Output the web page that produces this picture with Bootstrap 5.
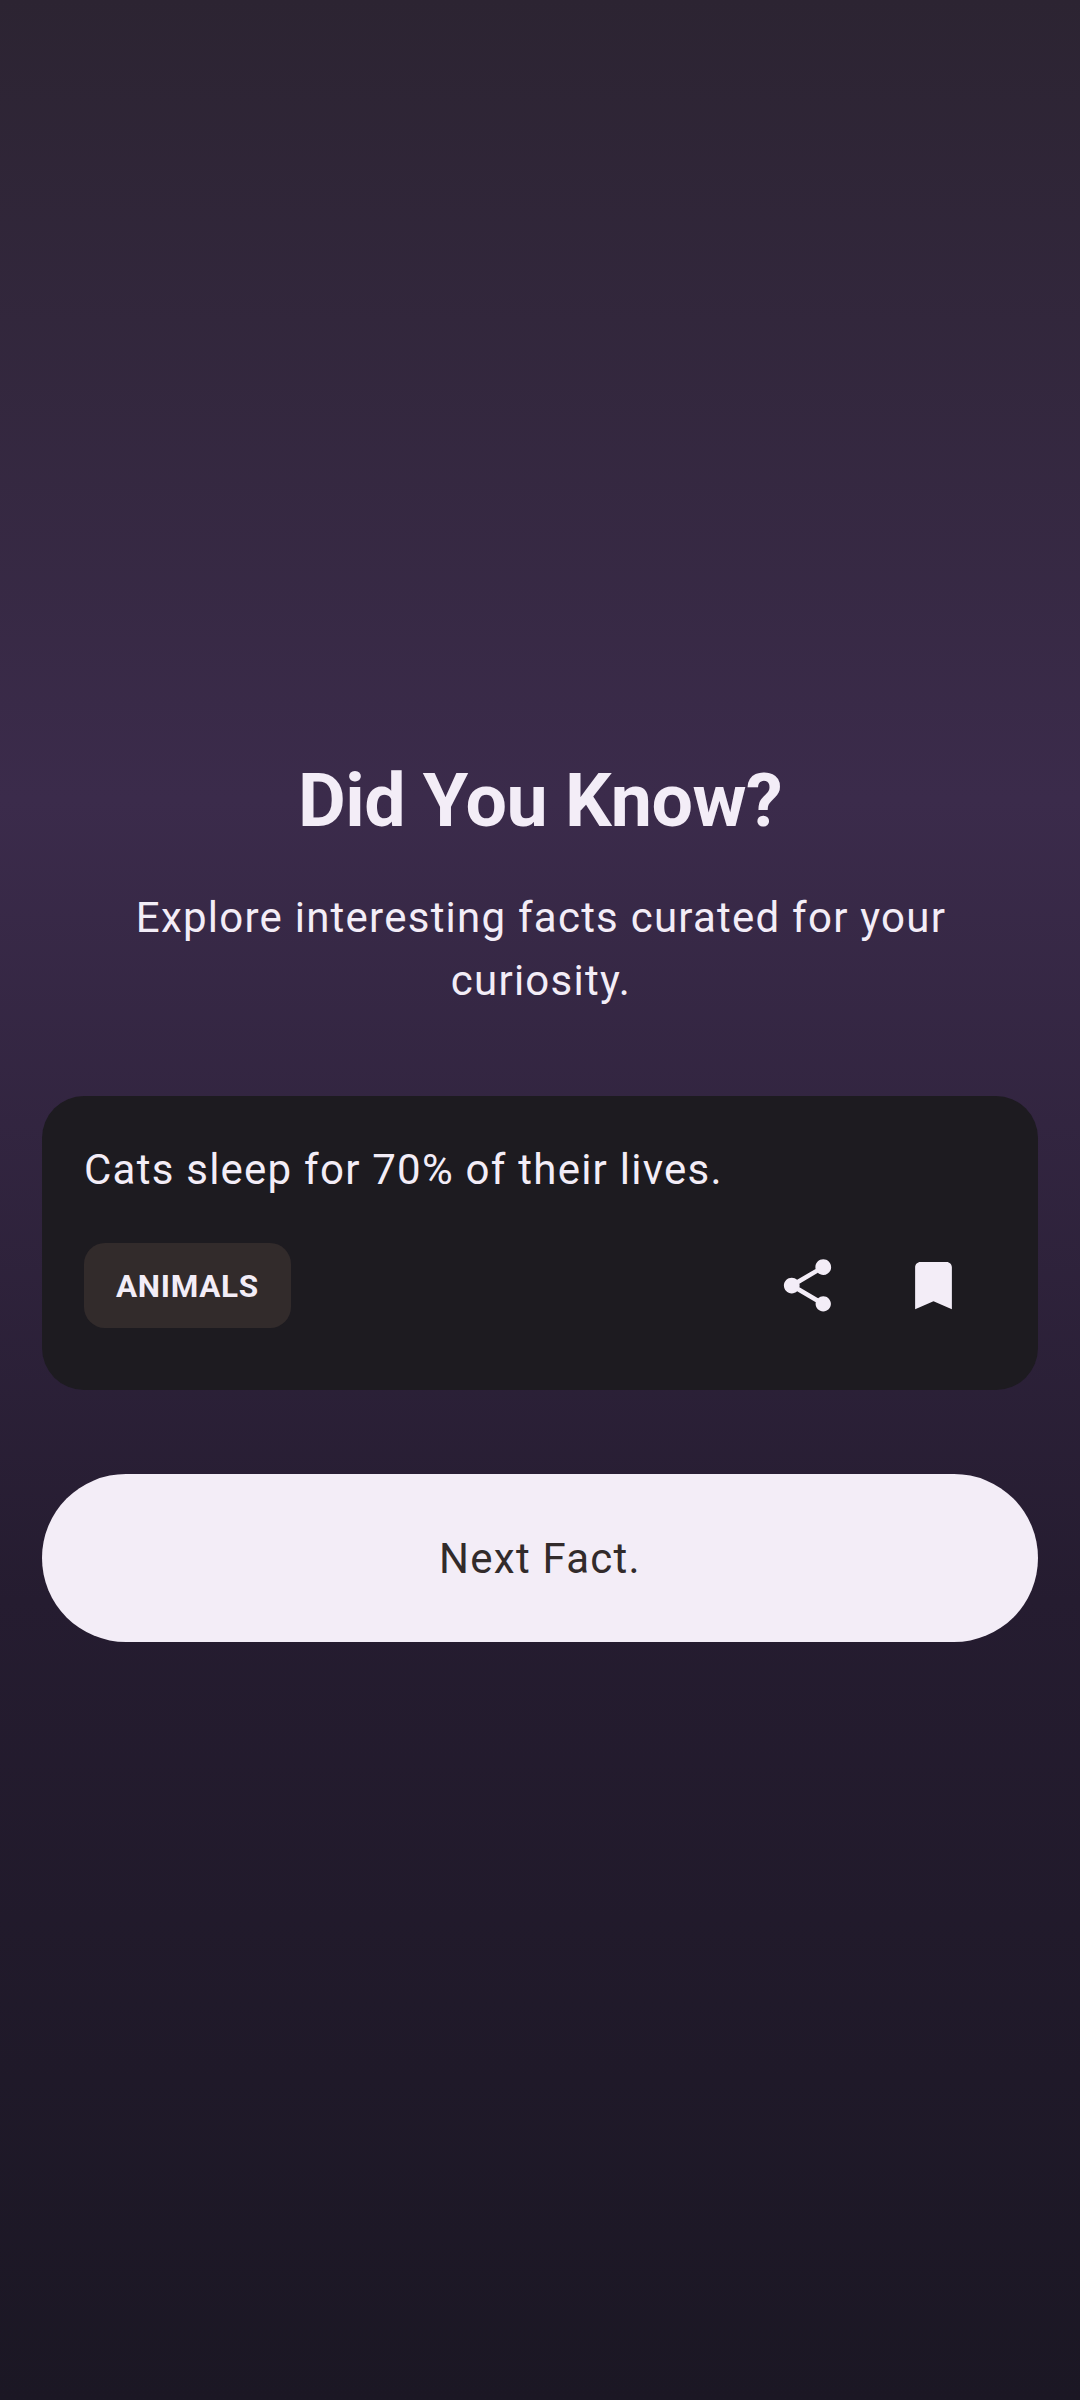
<!DOCTYPE html>
<html lang="en">
<head>
<meta charset="utf-8">
<meta name="viewport" content="width=device-width, initial-scale=1">
<title>Did You Know?</title>
<link href="https://cdn.jsdelivr.net/npm/bootstrap@5.3.0/dist/css/bootstrap.min.css" rel="stylesheet">
<style>
  body { font-family: Roboto, sans-serif; font-size: 42px; line-height: 63px; letter-spacing: 1.24px; color: #f3edf7; }
  .fact-screen { height: 2400px; padding: 758px 42px 0; background: linear-gradient(180deg, #2c2432 0%, #3b2b4b 33.33%, #251c30 66.67%, #1b1724 100%); }
  .fact-title { font-size: 73.5px; line-height: 86px; font-weight: 700; letter-spacing: -.5px; margin-bottom: 42px; }
  .fact-intro { padding: 0 41px 0 43px; margin-bottom: 84px; }
  .fact-card { background: #1d1b20; color: inherit; border-radius: 42px; padding: 42px; margin-bottom: 84px; }
  .fact-text { margin-bottom: 21px; }
  .fact-chip { background: #322b2b; border-radius: 21px; height: 85px; padding: 2px 32px 0; font-size: 31.5px; font-weight: 700; letter-spacing: .68px; }
  .fact-action { width: 126px; height: 126px; color: inherit; }
  .fact-action svg { width: 63px; height: 63px; }
  .fact-next, .fact-next:hover { height: 168px; background: #f3edf7; color: #322b2b; font-size: 42px; letter-spacing: 1.24px; }
</style>
</head>
<body>
<main class="fact-screen d-flex flex-column">
  <h1 class="fact-title text-center">Did You Know?</h1>
  <p class="fact-intro text-center">Explore interesting facts curated for your curiosity.</p>
  <section class="fact-card card border-0">
    <p class="fact-text">Cats sleep for 70% of their lives.</p>
    <div class="d-flex align-items-center">
      <span class="fact-chip d-inline-flex align-items-center me-auto">ANIMALS</span>
      <button type="button" class="fact-action btn border-0 p-0 d-flex align-items-center justify-content-center" aria-label="Share">
        <svg viewBox="0 0 24 24" fill="currentColor"><path d="M18 16.08c-.76 0-1.44.3-1.96.77L8.91 12.7c.05-.23.09-.46.09-.7s-.04-.47-.09-.7l7.05-4.11c.54.5 1.25.81 2.04.81 1.66 0 3-1.34 3-3s-1.34-3-3-3-3 1.34-3 3c0 .24.04.47.09.7L8.04 9.81C7.5 9.31 6.79 9 6 9c-1.66 0-3 1.34-3 3s1.34 3 3 3c.79 0 1.5-.31 2.04-.81l7.12 4.16c-.05.21-.08.43-.08.65 0 1.61 1.31 2.92 2.92 2.92s2.92-1.31 2.92-2.92-1.31-2.92-2.92-2.92z"/></svg>
      </button>
      <button type="button" class="fact-action btn border-0 p-0 d-flex align-items-center justify-content-center" aria-label="Bookmark">
        <svg viewBox="0 0 24 24" fill="currentColor"><path d="M17 3H7c-1.1 0-2 .9-2 2v16l7-3 7 3V5c0-1.1-.9-2-2-2z"/></svg>
      </button>
    </div>
  </section>
  <button type="button" class="fact-next btn border-0 rounded-pill w-100">Next Fact.</button>
</main>
<script src="https://cdn.jsdelivr.net/npm/bootstrap@5.3.0/dist/js/bootstrap.bundle.min.js"></script>
</body>
</html>
